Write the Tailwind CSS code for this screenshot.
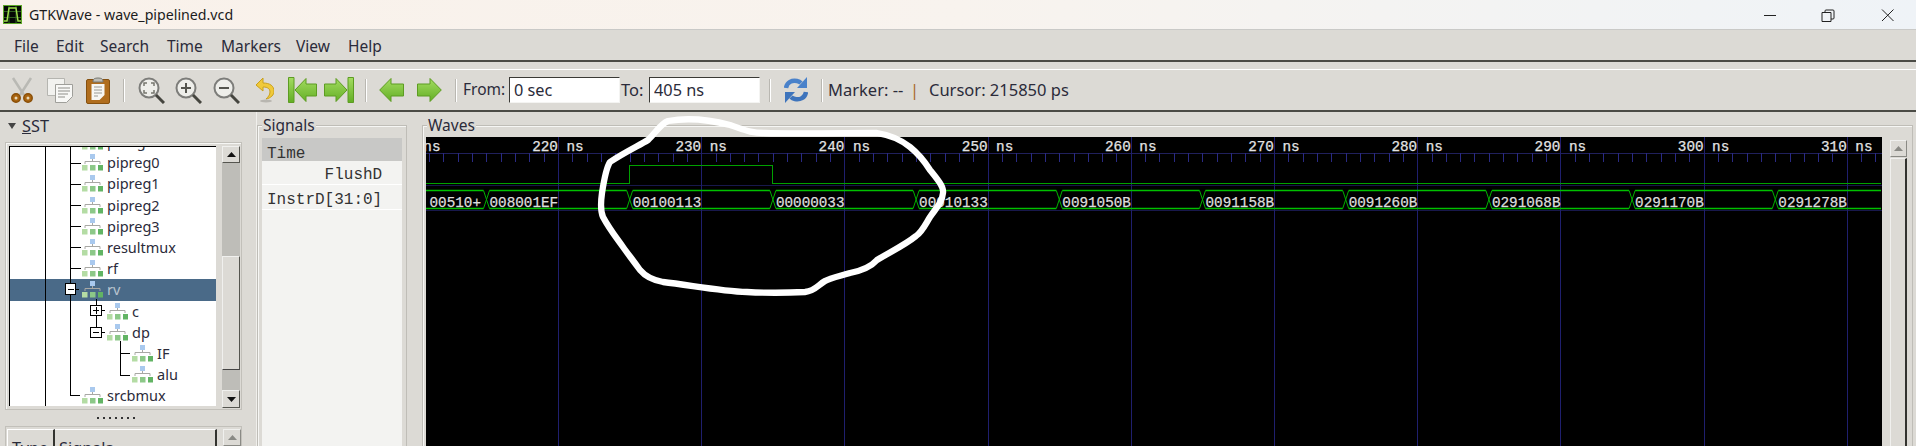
<!DOCTYPE html>
<html lang="en">
<head>
  <meta charset="UTF-8">
  <title>GTKWave - wave_pipelined.vcd</title>
  <script src="https://cdn.jsdelivr.net/npm/@tailwindcss/browser@4"></script>
</head>
<body class="relative h-[446px] w-[1916px] overflow-hidden bg-[#dcdad5] font-['Noto_Sans',sans-serif] text-[#2b2b3a]">

  <!-- shared icon shapes -->
  <svg class="absolute h-0 w-0">
    <defs>
      <linearGradient id="gr" x1="0" y1="0" x2="0" y2="1"><stop offset="0" stop-color="#a4dc62"/><stop offset="1" stop-color="#62ae24"/></linearGradient>
      <symbol id="mod" viewBox="0 0 21 17">
        <rect x="8" y="0" width="5" height="5" fill="#a9c9ee"/>
        <path d="M10.500 5v2.500M3 10V7.500h15V10" fill="none" stroke="#a8a8a4"/>
        <rect x="0" y="11" width="5.500" height="5.500" fill="#b4dca4"/><rect x="8" y="11" width="5.500" height="5.500" fill="#8cc888"/><rect x="16" y="11" width="5" height="5.500" fill="#62b464"/>
      </symbol>
      <symbol id="lens" viewBox="0 0 27 27">
        <circle cx="11" cy="11" r="9.500" fill="#eeeeea" stroke="#7d7d7a" stroke-width="2"/>
        <path d="M18 18l8 8" stroke="#45453f" stroke-width="3"/>
      </symbol>
    </defs>
  </svg>

  <!-- title bar -->
  <div class="flex h-[30px] items-center border-b border-[#c9c9c7] bg-gradient-to-r from-[#f9f1ea] via-[#f8f3ee] to-[#eff3f7]">
    <svg class="ml-[3px] h-[19px] w-[19px]" viewBox="0 0 19 19">
      <rect width="19" height="19" fill="#5ea828"/><rect x="1" y="1" width="17" height="17" fill="#050805"/>
      <path d="M1 6.500h17M1 12.500h17M6 1v17M13 1v17" stroke="#2f5f20"/>
      <path d="M1 16h3l2-13h7l2 13h3" fill="none" stroke="#9fe04a" stroke-width="1.500"/>
    </svg>
    <span class="ml-[7px] text-[14.2px] text-[#1c1c1c]">GTKWave - wave_pipelined.vcd</span>
    <svg class="ml-auto mr-[22px] h-[14px] w-[130px]" viewBox="0 0 130 14" fill="none" stroke="#222">
      <path d="M0 7.500h12"/>
      <path d="M58 4.500h9v9h-9zM61 4.500v-1.500a1 1 0 0 1 1-1h7a1 1 0 0 1 1 1v7a1 1 0 0 1-1 1h-2"/>
      <path d="M118 1.500l11.500 11.500M129.500 1.500l-11.500 11.500"/>
    </svg>
  </div>

  <!-- menu bar -->
  <div class="flex h-[32px] items-center border-b-2 border-[#4b4b45] pl-[14px] pt-[3px] text-[15.5px]">
    <span class="w-[42px]">File</span>
    <span class="w-[44px]">Edit</span>
    <span class="w-[67px]">Search</span>
    <span class="w-[54px]">Time</span>
    <span class="w-[75px]">Markers</span>
    <span class="w-[52px]">View</span>
    <span>Help</span>
  </div>

  <!-- toolbar -->
  <div class="mt-[7px] flex h-[43px] items-center border-t border-b-2 border-t-white border-b-[#4b4b45] text-[16.5px]">
    <svg class="ml-[11px] h-[27px] w-[22px]" viewBox="0 0 22 27">
      <path d="M2 1l11 17M20 1L9 18" stroke="#b9b9b4" stroke-width="2.500" fill="none"/>
      <circle cx="5" cy="21" r="4.200" fill="#a9640f" stroke="#8a4f08" stroke-width="1.500"/><circle cx="17" cy="21" r="4.200" fill="#a9640f" stroke="#8a4f08" stroke-width="1.500"/>
      <circle cx="5" cy="21" r="1.500" fill="#e8d8b8"/><circle cx="17" cy="21" r="1.500" fill="#e8d8b8"/>
    </svg>
    <svg class="ml-[14px] h-[25px] w-[26px]" viewBox="0 0 26 25">
      <path d="M.5.500h17v17H.5z" fill="#f2f2ef" stroke="#b5b5b0"/>
      <path d="M8.500 6.500h17v12l-6 6h-11z" fill="#f8f8f6" stroke="#9f9f9a"/>
      <path d="M11 10h12M11 13h12M11 16h10M11 19h7" stroke="#8f8f8a"/>
    </svg>
    <svg class="ml-[13px] h-[27px] w-[24px]" viewBox="0 0 24 27">
      <rect x=".5" y="2.500" width="23" height="24" rx="1.500" fill="#b06d1d" stroke="#85500f"/>
      <path d="M7 4q0-3 5-3t5 3v1H7z" fill="#bdbdb8" stroke="#77776f"/>
      <path d="M5.500 7h13v11l-5 5h-8z" fill="#f7f7f4"/>
      <path d="M8 10h8M8 13h8M8 16h8M8 19h4" stroke="#9a9a94"/>
    </svg>
    <div class="ml-[13px] h-[23px] w-[2px] border-l border-[#b9b7b1] bg-white"></div>

    <svg class="ml-[13px] h-[27px] w-[27px]" viewBox="0 0 27 27"><use href="#lens"/><path d="M6 9V6h3M13 6h3v3M16 13v3h-3M9 16H6v-3" fill="none" stroke="#77776f" stroke-width="1.500"/></svg>
    <svg class="ml-[10px] h-[27px] w-[27px]" viewBox="0 0 27 27"><use href="#lens"/><path d="M6 11h10M11 6v10" stroke="#55554f" stroke-width="2"/></svg>
    <svg class="ml-[11px] h-[27px] w-[27px]" viewBox="0 0 27 27"><use href="#lens"/><path d="M6 11h10" stroke="#55554f" stroke-width="2"/></svg>
    <svg class="ml-[15px] h-[26px] w-[19px]" viewBox="0 0 19 26">
      <path d="M8 1L1 8l7 6v-4c5 0 7 2 7 5 0 3-2 5-4 7 5-1 8-4 8-8 0-5-4-8-11-8z" fill="#f0c93a" stroke="#c9a01c"/>
      <ellipse cx="11" cy="24" rx="6" ry="1.500" fill="#b8b6b0"/>
    </svg>
    <svg class="ml-[14px] h-[26px] w-[29px]" viewBox="0 0 29 26">
      <path d="M.5.500h5.500v25H.5zM7 13L18 1.500V7h10.500v12H18v5.500z" fill="url(#gr)" stroke="#5d9c22"/>
    </svg>
    <svg class="ml-[7px] h-[26px] w-[30px]" viewBox="0 0 30 26">
      <path d="M29.500.500H24v25h5.500zM23 13L12 1.500V7H.5v12H12v5.500z" fill="url(#gr)" stroke="#5d9c22"/>
    </svg>
    <div class="ml-[11px] h-[23px] w-[2px] border-l border-[#b9b7b1] bg-white"></div>

    <svg class="ml-[12px] h-[26px] w-[25px]" viewBox="0 0 25 26"><path d="M.7 13L12 1.500V7h12.500v12H12v5.500z" fill="url(#gr)" stroke="#5d9c22"/></svg>
    <svg class="ml-[13px] h-[26px] w-[25px]" viewBox="0 0 25 26"><path d="M24.300 13L13 1.500V7H.5v12H13v5.500z" fill="url(#gr)" stroke="#5d9c22"/></svg>
    <div class="ml-[13px] h-[23px] w-[2px] border-l border-[#b9b7b1] bg-white"></div>

    <span class="ml-[6px] w-[46px] text-[15.5px]">From:</span>
    <input class="h-[26px] w-[111px] border border-[#3a3a36] border-r-[#f4f4f2] border-b-[#f4f4f2] bg-white pl-[4px] text-[16.3px] outline-none" value="0 sec">
    <span class="ml-[1px] w-[28px]">To:</span>
    <input class="h-[26px] w-[111px] border border-[#3a3a36] border-r-[#f4f4f2] border-b-[#f4f4f2] bg-white pl-[4px] text-[16.3px] outline-none" value="405 ns">
    <div class="ml-[9px] h-[23px] w-[2px] border-l border-[#b9b7b1] bg-white"></div>

    <svg class="ml-[13px] h-[26px] w-[24px]" viewBox="0 0 24 26">
      <path d="M2 11C3 5 8 3 13 4c2 .4 3 1 4 2" fill="none" stroke="#4a82ca" stroke-width="4.500"/>
      <path d="M23 0v11H13z" fill="#4a82ca"/>
      <path d="M22 15c-1 6-6 8-11 7-2-.4-3-1-4-2" fill="none" stroke="#3e74bc" stroke-width="4.500"/>
      <path d="M1 26V15h10z" fill="#3e74bc"/>
    </svg>
    <div class="ml-[13px] h-[23px] w-[2px] border-l border-[#b9b7b1] bg-white"></div>
    <span class="ml-[5px] w-[74px] whitespace-pre">Marker: --</span>
    <span class="ml-[8px] w-[7px] text-[#a9692a]">|</span>
    <span class="ml-[12px] whitespace-pre">Cursor: 215850 ps</span>
  </div>

  <!-- panes -->
  <div class="flex h-[334px]">

    <!-- SST -->
    <div class="w-[257px] shrink-0 border-r border-[#f0efec]">
      <div class="flex h-[30px] items-center pb-[2px] pl-[8px] text-[16.3px]">
        <svg class="h-[6px] w-[8px]" viewBox="0 0 8 6"><path d="M0 0h8L4 6z" fill="#444"/></svg>
        <span class="ml-[6px]"><span class="underline">S</span>ST</span>
      </div>

      <div class="ml-[5px] flex h-[268px] w-[237px] gap-[6px] border border-[#c2c0ba] pl-[3px] pr-[1px] pt-[3px] shadow-[inset_1px_1px_0_#f6f6f4]">
        <div class="relative h-[260px] w-[207px] overflow-hidden border-l border-t border-black bg-white text-[14.5px] leading-[21.2px]">
          <div class="-mt-[16px]" id="tree">
            <div class="flex h-[21.2px] items-center pl-[72px]"><svg class="mr-[4px] h-[17px] w-[21px]"><use href="#mod"/></svg>pcreg</div>
            <div class="flex h-[21.2px] items-center pl-[72px]"><svg class="mr-[4px] h-[17px] w-[21px]"><use href="#mod"/></svg>pipreg0</div>
            <div class="flex h-[21.2px] items-center pl-[72px]"><svg class="mr-[4px] h-[17px] w-[21px]"><use href="#mod"/></svg>pipreg1</div>
            <div class="flex h-[21.2px] items-center pl-[72px]"><svg class="mr-[4px] h-[17px] w-[21px]"><use href="#mod"/></svg>pipreg2</div>
            <div class="flex h-[21.2px] items-center pl-[72px]"><svg class="mr-[4px] h-[17px] w-[21px]"><use href="#mod"/></svg>pipreg3</div>
            <div class="flex h-[21.2px] items-center pl-[72px]"><svg class="mr-[4px] h-[17px] w-[21px]"><use href="#mod"/></svg>resultmux</div>
            <div class="flex h-[21.2px] items-center pl-[72px]"><svg class="mr-[4px] h-[17px] w-[21px]"><use href="#mod"/></svg>rf</div>
            <div class="flex h-[21.2px] items-center bg-[#4a6a88] pl-[72px] text-[#b9c4cf]"><svg class="mr-[4px] h-[17px] w-[21px]"><use href="#mod"/></svg>rv</div>
            <div class="flex h-[21.2px] items-center pl-[97px]"><svg class="mr-[4px] h-[17px] w-[21px]"><use href="#mod"/></svg>c</div>
            <div class="flex h-[21.2px] items-center pl-[97px]"><svg class="mr-[4px] h-[17px] w-[21px]"><use href="#mod"/></svg>dp</div>
            <div class="flex h-[21.2px] items-center pl-[122px]"><svg class="mr-[4px] h-[17px] w-[21px]"><use href="#mod"/></svg>IF</div>
            <div class="flex h-[21.2px] items-center pl-[122px]"><svg class="mr-[4px] h-[17px] w-[21px]"><use href="#mod"/></svg>alu</div>
            <div class="flex h-[21.2px] items-center pl-[72px]"><svg class="mr-[4px] h-[17px] w-[21px]"><use href="#mod"/></svg>srcbmux</div>
          </div>
          <!-- tree guide lines, drawn over the rows -->
          <svg class="absolute left-0 top-0 h-[260px] w-[207px]" viewBox="0 0 207 260" fill="none" stroke="#000" shape-rendering="crispEdges">
            <path d="M35.500 0v260M60.500 0v248.500h9M60.500 16.500h10M60.500 37.500h10M60.500 58.500h10M60.500 79.500h10M60.500 100.500h10M60.500 121.500h10"/>
            <path d="M86.500 152v34M110.500 194v34.500h9M110.500 206.500h9"/>
            <path d="M66 142.500h3M92 163.500h3M92 185.500h3"/>
            <rect x="55.500" y="136.500" width="10" height="11" fill="#fff" stroke-width="1"/>
            <path d="M58 142.500h6"/>
            <rect x="80.500" y="158.500" width="11" height="10" fill="#fff"/>
            <path d="M83 163.500h6M86.500 160v7"/>
            <rect x="80.500" y="180.500" width="11" height="10" fill="#fff"/>
            <path d="M83 185.500h6"/>
          </svg>
        </div>

        <div class="flex h-[262px] w-[18px] flex-col bg-[#bebdb8]">
          <div class="flex h-[17px] items-center justify-center border border-[#f0f0ee] border-b-[#55554f] border-r-[#55554f] bg-[#dcdad5]"><svg class="h-[5px] w-[9px]" viewBox="0 0 9 5"><path d="M0 5h9L4.500 0z" fill="#111"/></svg></div>
          <div class="mt-[93px] h-[114px] border border-[#f0f0ee] border-b-[#444] border-r-[#55554f] bg-[#dcdad5]"></div>
          <div class="mt-auto flex h-[18px] items-center justify-center border border-[#f0f0ee] border-b-[#55554f] border-r-[#55554f] bg-[#dcdad5]"><svg class="h-[5px] w-[9px]" viewBox="0 0 9 5"><path d="M0 0h9L4.500 5z" fill="#111"/></svg></div>
        </div>
      </div>

      <!-- pane handle -->
      <div class="flex h-[16px] items-center justify-center gap-[4px] pr-[24px]">
        <i class="h-[2px] w-[2px] bg-[#333]"></i><i class="h-[2px] w-[2px] bg-[#333]"></i><i class="h-[2px] w-[2px] bg-[#333]"></i><i class="h-[2px] w-[2px] bg-[#333]"></i><i class="h-[2px] w-[2px] bg-[#333]"></i><i class="h-[2px] w-[2px] bg-[#333]"></i><i class="h-[2px] w-[2px] bg-[#333]"></i>
      </div>

      <div class="ml-[5px] flex h-[30px] w-[237px] gap-[6px] border border-[#c2c0ba] pl-[1px] pt-[2px] text-[16.3px]">
        <div class="h-[30px] w-[48px] border-l border-t border-white border-r-2 border-r-[#33332f] pl-[4px] pt-[6px]">Type</div>
        <div class="-ml-[6px] h-[30px] w-[162px] border-r-2 border-t border-t-white border-r-[#33332f] pl-[4px] pt-[6px]">Signals</div>
        <div class="flex h-[17px] w-[18px] items-center justify-center border border-[#f0f0ee] border-b-[#8a8a85] border-r-[#8a8a85]"><svg class="h-[5px] w-[9px]" viewBox="0 0 9 5"><path d="M0 5h9L4.500 0z" fill="#8a8a85"/></svg></div>
      </div>
    </div>

    <!-- Signals -->
    <div class="relative mt-[13px] h-[330px] w-[150px] shrink-0 border border-[#bfbdb7] px-[4px] pt-[12px] shadow-[inset_1px_1px_0_#f6f6f4]">
      <span class="absolute -top-[12px] left-[4px] bg-[#dcdad5] px-[1px] text-[15.5px]">Signals</span>
      <div class="h-full bg-[#f3f3f1] font-['Liberation_Mono',monospace] text-[16px] text-[#333]">
        <div class="h-[23px] bg-[#c8c8c6] pl-[5px] leading-[33px]">Time</div>
        <div class="h-[24px] whitespace-pre border-b border-white pl-[5px] leading-[29px]">      FlushD</div>
        <div class="h-[25px] border-b border-white pl-[5px] leading-[31px]">InstrD[31:0]</div>
      </div>
    </div>

    <!-- Waves -->
    <div class="relative ml-[15px] mt-[13px] flex h-[330px] w-[1491px] shrink-0 border border-[#bfbdb7] pl-[3px] pt-[11px] shadow-[inset_1px_1px_0_#f6f6f4]">
      <span class="absolute -top-[12px] left-[4px] bg-[#dcdad5] px-[1px] text-[15.5px]">Waves</span>
      <svg id="waves" class="h-[309px] w-[1456px] shrink-0 bg-black font-['Liberation_Mono',monospace] text-[14.3px]" viewBox="426 137 1456 309"></svg>
      <div class="ml-[8px] mt-[3px] w-[17px]">
        <div class="flex h-[17px] items-center justify-center border border-[#f0f0ee] border-b-[#8a8a85] border-r-[#8a8a85]"><svg class="h-[5px] w-[9px]" viewBox="0 0 9 5"><path d="M0 5h9L4.500 0z" fill="#8a8a85"/></svg></div>
        <div class="mt-[1px] h-[300px] border-l border-t border-r-2 border-[#f0f0ee] border-r-[#33332f] bg-[#dcdad5]"></div>
      </div>
    </div>
  </div>

  <!-- hand drawn circle on top of the screenshot -->
  <svg class="pointer-events-none absolute left-0 top-0 h-[446px] w-[1916px]" viewBox="0 0 1916 446" fill="none" stroke="#fff" stroke-width="6.300" stroke-linecap="round" stroke-linejoin="round">
    <path d="M648 140C655 134 660 124 668 121C685 118 703 118 730 125C745 130 750 133 765 133C790 134 850 133 877 133C890 135 900 139 910 147C920 155 925 162 930 170C938 180 944 187 943 193C942 203 936 208 930 217C925 225 922 232 916 236C905 245 890 252 877 260C870 268 860 271 850 273C840 276 830 278 825 281C818 285 815 291 805 292C785 293 765 293 747 292C720 291 690 285 663 282C652 280 645 276 640 270C632 259 628 254 623 247C616 237 610 230 603 217C600 210 601 200 602 193C604 180 606 168 610 162C625 152 640 145 648 140"/>
  </svg>

  <script>
    const svg = document.getElementById('waves');
    const NS = 'http://www.w3.org/2000/svg';
    const RIGHT = 1881;
    const STEP = 143.2;

    function add(tag, attrs, text) {
      const el = document.createElementNS(NS, tag);
      for (const k in attrs) el.setAttribute(k, attrs[k]);
      if (text) el.textContent = text;
      svg.appendChild(el);
    }
    function hline(y, color) {
      add('path', { d: `M426 ${y}H1882`, stroke: color, 'shape-rendering': 'crispEdges' });
    }

    // time ruler and grid
    hline(153.5, '#20205c');
    hline(185.5, '#18184c');
    hline(210.5, '#18184c');
    for (let i = -1; i < 10; i++) {
      const x = 558 + i * STEP;
      const gx = Math.round(x) + 0.5;
      add('path', { d: `M${gx} 137V446`, stroke: '#1f1f6e', 'shape-rendering': 'crispEdges' });
      for (let t = 1; t < 10; t++) {
        const tx = Math.round(x + t * STEP / 10) + 0.5;
        if (tx < 1882) add('path', { d: `M${tx} 153V162`, stroke: '#2a2a84', 'shape-rendering': 'crispEdges' });
      }
      add('text', { x: x - 25.8, y: 151, fill: '#e4e4e4', stroke: '#e4e4e4', 'stroke-width': 0.25 }, (220 + i * 10) + ' ns');
    }

    // FlushD
    add('path', { d: `M426 183.500H629.500V165.500H772.500V183.500H${RIGHT}`, stroke: '#00a000', fill: 'none', 'shape-rendering': 'crispEdges' });

    // InstrD[31:0]
    const values = ['00510+', '008001EF', '00100113', '00000033', '00010133', '0091050B', '0091158B', '0091260B', '0291068B', '0291170B', '0291278B'];
    const busTop = 190.5, busBot = 208.5;
    let topPath = `M426 ${busTop}`, botPath = `M426 ${busBot}`;
    values.forEach((v, i) => {
      const t = 486.5 + (i - 1) * STEP;
      if (i > 0) {
        add('path', { d: `M${t - 3} ${busTop}L${t + 3} ${busBot}M${t - 3} ${busBot}L${t + 3} ${busTop}`, stroke: '#00b000', fill: 'none' });
        topPath += `H${t - 3}M${t + 3} ${busTop}`;
        botPath += `H${t - 3}M${t + 3} ${busBot}`;
      }
      add('text', { x: i === 0 ? 429.5 : t + 3, y: 207, fill: '#dedede', stroke: '#dedede', 'stroke-width': 0.25 }, v);
    });
    add('path', { d: `${topPath}H${RIGHT}`, stroke: '#00c000', 'stroke-width': 1.4, fill: 'none' });
    add('path', { d: `${botPath}H${RIGHT}`, stroke: '#00c000', 'stroke-width': 1.4, fill: 'none' });
  </script>
</body>
</html>
